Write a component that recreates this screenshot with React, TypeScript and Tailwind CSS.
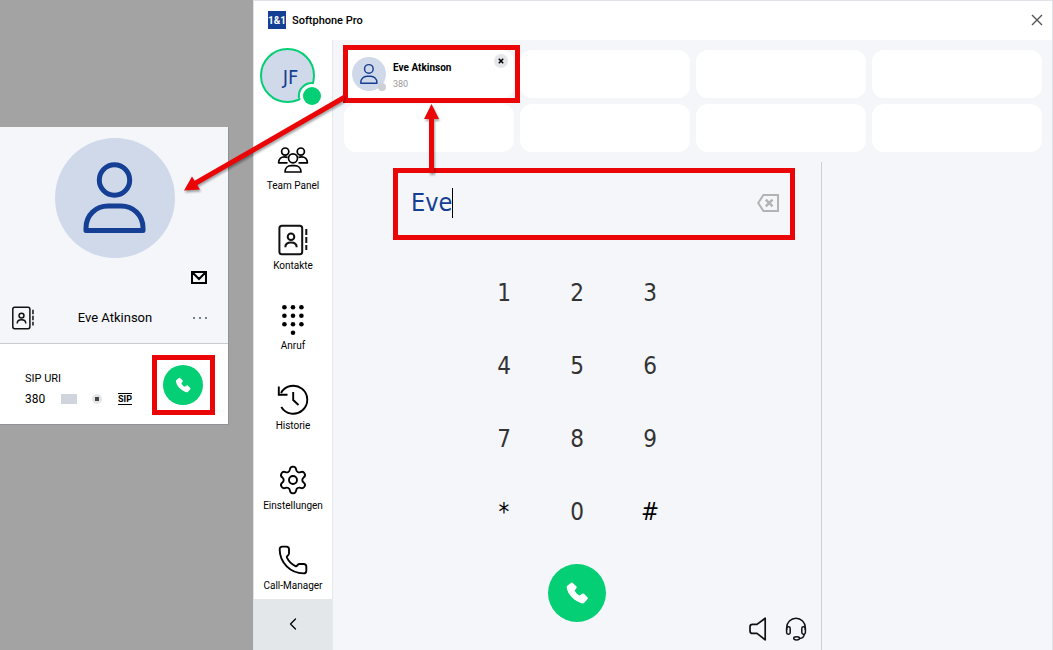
import React from "react";
import { Phone, Settings, ChevronLeft } from "lucide-react";

interface IconProps {
  className?: string;
}

function PersonIcon({ className }: IconProps) {
  return (
    <svg viewBox="0 0 120 120" className={className} fill="none" stroke="#153f94" aria-hidden="true">
      <circle cx="59.5" cy="42" r="15.2" />
      <path d="M31 92.5V90C31 77 41 68 53 68H66C78 68 88 77 88 90V92.5Z" strokeLinejoin="round" />
    </svg>
  );
}

function HandsetIcon({ className }: IconProps) {
  return (
    <svg viewBox="0 0 58 58" className={className} fill="#fff" aria-hidden="true">
      <path d="M19 22 23.2 18.7Q24 18.2 24.8 18.9L28.5 22.6Q29 23.2 28.5 24L26.6 26.8Q28.4 30 31.4 31.6L34.6 29.6Q35.4 29.2 36 29.8L39.6 33.6Q40.2 34.4 39.6 35.1L36 39Q35.2 39.7 34 39.4C26.5 36.8 19.6 30.5 18.7 23.4Q18.6 22.5 19 22Z" />
    </svg>
  );
}

function TeamIcon() {
  return (
    <svg viewBox="0 0 32 32" className="size-8" fill="none" stroke="#000" strokeWidth="1.7" strokeLinejoin="round" aria-hidden="true">
      <circle cx="8.2" cy="7.6" r="3.6" />
      <circle cx="23.8" cy="7.6" r="3.6" />
      <path d="M10.5 18.8H1.6c0-3.8 2.6-6 5.8-6 1.4 0 2.4.2 3.2.7M21.5 18.800H30.400c0-3.800-2.600-6-5.800-6-1.400 0-2.400.2-3.200.7" />
      <circle cx="16" cy="14.3" r="4.5" />
      <path d="M8 28c0-4 2.800-6.300 6.300-6.300h3.400c3.500 0 6.300 2.300 6.300 6.300Z" />
    </svg>
  );
}

function ContactsIcon({ className }: IconProps) {
  return (
    <svg viewBox="0 0 32 32" className={className} fill="none" stroke="#111" strokeWidth="2" aria-hidden="true">
      <rect x="2.4" y="1.8" width="22.8" height="28.4" rx="2.5" />
      <circle cx="14" cy="12.8" r="3.3" />
      <path d="M8.3 23.2c0-3.6 2.3-4.8 5.7-4.8s5.7 1.2 5.7 4.8M29.3 5v6M29.3 13v6M29.3 21v5" />
    </svg>
  );
}

function DialpadIcon() {
  const rows = [3.2, 11.8, 20.2];
  return (
    <svg viewBox="0 0 32 32" className="size-8" fill="#000" aria-hidden="true">
      {rows.map((y) => (
        <React.Fragment key={y}>
          <circle cx="7.4" cy={y} r="2.3" />
          <circle cx="16" cy={y} r="2.3" />
          <circle cx="24.4" cy={y} r="2.3" />
        </React.Fragment>
      ))}
      <circle cx="16" cy="28.8" r="2.3" />
    </svg>
  );
}

function HistoryIcon() {
  return (
    <svg viewBox="0 0 32 32" className="size-8" fill="none" stroke="#000" strokeWidth="1.9" aria-hidden="true">
      <path d="M4 9A14 14 0 1 1 4.300 23M1.800 2.500V10.800H10.500M16.200 8V16L21.500 21" />
    </svg>
  );
}

function BackspaceIcon() {
  return (
    <svg viewBox="0 0 22 18" className="h-[18px] w-[22px]" fill="none" stroke="#b3b3b3" strokeWidth="2" aria-hidden="true">
      <path d="M6.4 1H21V17H6.4L1.2 9Z" />
      <path d="M8.8 5.600 15.600 12.400M15.600 5.600 8.800 12.400" strokeWidth="2.4" />
    </svg>
  );
}

function SpeakerIcon() {
  return (
    <svg viewBox="0 0 18 24" className="h-6 w-[18px]" fill="none" stroke="#111" strokeWidth="1.7" strokeLinejoin="round" aria-hidden="true">
      <path d="M3.5 7.4H8L16.2 1.200V22.800L8 16.400H3.500Q1 16.400 1 14V9.800Q1 7.400 3.500 7.400Z" />
    </svg>
  );
}

function HeadsetIcon() {
  return (
    <svg viewBox="0 0 22 24" className="h-6 w-[22px]" fill="none" stroke="#111" strokeWidth="1.5" aria-hidden="true">
      <path d="M1.700 13V10.600A9.300 9.300 0 0 1 20.300 10.600V13" />
      <rect x="1.6" y="9.8" width="3.6" height="7.4" rx="1.6" />
      <rect x="16.8" y="9.8" width="3.6" height="7.4" rx="1.6" />
      <path d="M19.2 17c0 3-1.6 4.3-4.800 4.500" />
      <ellipse cx="11.6" cy="21.3" rx="2.9" ry="1.6" />
    </svg>
  );
}

const navItems = [
  { label: "Team Panel", icon: <TeamIcon /> },
  { label: "Kontakte", icon: <ContactsIcon className="size-8" /> },
  { label: "Anruf", icon: <DialpadIcon /> },
  { label: "Historie", icon: <HistoryIcon /> },
  { label: "Einstellungen", icon: <Settings className="size-8" color="#000" strokeWidth={1.4} /> },
  { label: "Call-Manager", icon: <Phone className="size-8" color="#000" strokeWidth={1.4} /> },
];

const keys = ["1", "2", "3", "4", "5", "6", "7", "8", "9", "*", "0", "#"];

function ContactCard() {
  return (
    <section className="mt-[127px] mr-6 border-r border-b border-[#8f9296] bg-white">
      <div className="flex h-[217px] flex-col border-b border-[#c9cccf] bg-[#f4f6fa] pt-[11px]">
        <div className="ml-0.5 size-[120px] self-center rounded-full bg-[#d0d9ea]">
          <PersonIcon className="size-[120px] [stroke-width:5]" />
        </div>
        <button aria-label="E-Mail" className="mt-[13px] mr-[21px] self-end">
          <svg viewBox="0 0 16 13" className="h-[13px] w-4" fill="none" stroke="#000" strokeWidth="2">
            <path d="M1 1H15V12H1ZM2 2 8 8 14 2" />
          </svg>
        </button>
        <div className="mt-[22px] flex items-center justify-between pr-[21px] pl-[11px]">
          <ContactsIcon className="size-6" />
          <h2 className="ml-0.5 text-[13px] leading-5 text-black">Eve Atkinson</h2>
          <button aria-label="Mehr" className="flex gap-1">
            <span className="size-0.5 bg-[#777e8c]" />
            <span className="size-0.5 bg-[#777e8c]" />
            <span className="size-0.5 bg-[#777e8c]" />
          </button>
        </div>
      </div>
      <div className="flex h-20 items-start justify-between pt-[11px] pr-[13px] pl-[25px]">
        <div className="pt-[14px] text-black">
          <p className="text-[11px] leading-5">SIP URI</p>
          <div className="flex items-center">
            <span className="w-9 text-[12px] leading-5">380</span>
            <span className="h-2.5 w-4 bg-[#cfd4dd]" />
            <span className="ml-[15px] flex size-2.5 items-center justify-center rounded-full bg-[#e3e6e8]">
              <span className="size-1 bg-[#444]" />
            </span>
            <span className="ml-4 border-y border-black text-[9px] leading-[10px] font-bold">SIP</span>
          </div>
        </div>
        <div className="w-[63px] border-[5px] border-[#ea0606] px-1.5 py-[5px]">
          <button aria-label="Anrufen" className="block size-10 rounded-full bg-[#04cf74]">
            <HandsetIcon className="size-10" />
          </button>
        </div>
      </div>
    </section>
  );
}

function Sidebar() {
  return (
    <nav className="flex w-[79px] shrink-0 flex-col border-r border-[#e6e8ec] bg-white">
      <div className="relative mt-2 ml-1.5 flex size-[55px] items-center justify-center rounded-full border-2 border-[#04cf74] bg-[#d0d9ea]">
        <span className="pt-0.5 pl-1.5 font-['DejaVu_Sans_Condensed','DejaVu_Sans',sans-serif] text-[20px] text-[#153f94]">JF</span>
        <svg viewBox="0 0 28 28" className="absolute -right-3 -bottom-2 size-7" aria-hidden="true">
          <circle cx="15" cy="15" r="12" fill="#fff" />
          <path d="M2 17A13 13 0 0 1 16 2" fill="none" stroke="#04cf74" strokeWidth="2" />
          <circle cx="15" cy="15" r="9" fill="#04cf74" />
        </svg>
      </div>
      <ul className="mt-[41px] grow">
        {navItems.map((item) => (
          <li key={item.label} className="h-20">
            <button className="flex w-full flex-col items-center gap-0.5 text-[10px] leading-4 text-black">
              {item.icon}
              {item.label}
            </button>
          </li>
        ))}
      </ul>
      <button
        aria-label="Einklappen"
        className="-mt-[25px] flex h-[51px] items-center justify-center bg-[#e4e7ea] pb-0.5"
      >
        <ChevronLeft className="size-5" color="#000" strokeWidth={1.5} />
      </button>
    </nav>
  );
}

function TeamSlots() {
  return (
    <div className="grid grid-cols-4 gap-1.5 p-2.5 pl-[11px]">
      <div className="relative flex h-12 items-center rounded-xl bg-white pl-2">
        <div className="relative size-[34px] shrink-0 rounded-full bg-[#d0d9ea]">
          <PersonIcon className="size-[34px] [stroke-width:5]" />
          <span className="absolute right-0 bottom-0 size-2 rounded-full bg-[#cdd0d4]" />
        </div>
        <div className="ml-[7px] pt-1">
          <p className="text-[10px] leading-4 font-bold text-black">Eve Atkinson</p>
          <p className="text-[9px] leading-4 text-[#999]">380</p>
        </div>
        <button
          aria-label="Entfernen"
          className="absolute top-1 right-1.5 flex size-[14px] items-center justify-center rounded-full bg-[#e4e7ea]"
        >
          <svg viewBox="0 0 6 6" className="size-1.5" stroke="#000" strokeWidth="1.6">
            <path d="M.8.8 5.200 5.200M5.200.8.8 5.200" />
          </svg>
        </button>
        <div className="pointer-events-none absolute -inset-y-[5px] -right-1.5 -left-px border-[5px] border-[#ea0606]" />
        <svg
          viewBox="0 0 164 100"
          className="pointer-events-none absolute top-[44px] right-full z-10 h-[100px] w-[164px] drop-shadow-[1px_2px_1px_rgba(0,0,0,0.35)]"
          aria-hidden="true"
        >
          <path d="M165 3 14 90" stroke="#ea0606" strokeWidth="5" />
          <path d="M4 96.500 12 82.500 20 95.500Z" fill="#ea0606" />
        </svg>
      </div>
      {[2, 3, 4, 5, 6, 7, 8].map((slot) => (
        <div key={slot} className="h-12 rounded-xl bg-white" />
      ))}
    </div>
  );
}

function Dialer() {
  return (
    <section className="flex w-[489px] shrink-0 flex-col border-r border-[#cdd0d4]">
      <div className="relative mt-1.5 mr-[26px] ml-[60px] flex h-[72px] items-center border-[5px] border-[#ea0606] pr-[11px] pb-0.5 pl-[13px]">
        <input
          aria-label="Name oder Nummer"
          defaultValue="Eve"
          className="field-sizing-content font-['DejaVu_Sans_Condensed','DejaVu_Sans',sans-serif] text-[25px] leading-8 text-[#153f94] outline-none"
        />
        <span className="h-[30px] w-px bg-black" />
        <button aria-label="Löschen" className="ml-auto">
          <BackspaceIcon />
        </button>
        <svg
          viewBox="0 0 16 70"
          className="pointer-events-none absolute bottom-full left-[26px] h-[70px] w-4 drop-shadow-[1px_2px_1px_rgba(0,0,0,0.35)]"
          aria-hidden="true"
        >
          <path d="M7.500 70V14" stroke="#ea0606" strokeWidth="5" />
          <path d="M7.500 1 15 16H0Z" fill="#ea0606" />
        </svg>
      </div>
      <div className="mt-4 grid grid-cols-3 self-center font-['DejaVu_Sans_Condensed','DejaVu_Sans',sans-serif] text-2xl">
        {keys.map((key) => (
          <button key={key} className={`size-[73px] ${key === "*" || key === "#" ? "text-black" : "text-[#333]"}`}>
            {key}
          </button>
        ))}
      </div>
      <button aria-label="Anrufen" className="mt-4 size-[58px] self-center rounded-full bg-[#04cf74]">
        <HandsetIcon className="size-[58px]" />
      </button>
      <div className="-mt-[5px] flex items-center justify-end gap-[18px] pr-[14px]">
        <button aria-label="Lautsprecher">
          <SpeakerIcon />
        </button>
        <button aria-label="Headset">
          <HeadsetIcon />
        </button>
      </div>
    </section>
  );
}

export default function App() {
  return (
    <div className="flex min-h-screen bg-[#a3a3a3] font-['Roboto',sans-serif]">
      <aside className="w-[253px] shrink-0">
        <ContactCard />
      </aside>
      <main className="flex min-w-0 grow flex-col border border-[#dfe2e6] bg-[#f4f6fa]">
        <header className="flex h-[39px] items-center bg-white pr-[9px] pb-px pl-[14px]">
          <span className="flex h-[18px] w-[18px] items-center justify-center bg-[#153f94] text-[10px] font-bold text-white">
            1&amp;1
          </span>
          <h1 className="ml-1.5 pt-0.5 text-[11px] font-medium text-black">Softphone Pro</h1>
          <button aria-label="Schließen" className="ml-auto">
            <svg viewBox="0 0 12 12" className="size-3" stroke="#555" strokeWidth="1.4">
              <path d="M1 1 11 11M11 1 1 11" />
            </svg>
          </button>
        </header>
        <div className="flex grow">
          <Sidebar />
          <div className="flex min-w-0 grow flex-col">
            <TeamSlots />
            <div className="flex grow">
              <Dialer />
            </div>
          </div>
        </div>
      </main>
    </div>
  );
}
